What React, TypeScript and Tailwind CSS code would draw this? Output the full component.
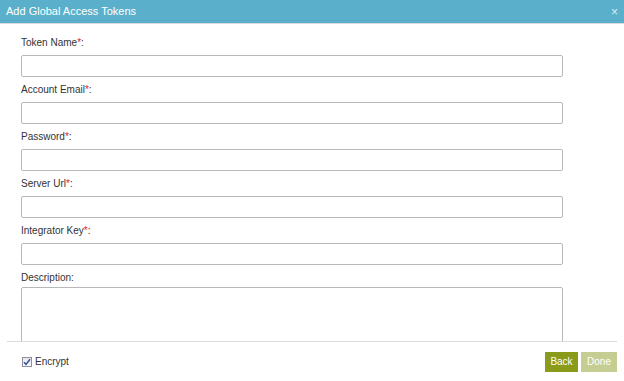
import React from "react";

const Field = ({ label, required = true }: { label: string; required?: boolean }) => (
  <div className="flex flex-col">
    <div className="h-[14px] text-[10px] leading-[14px] text-[#333]">
      {label}
      {required && <span className="text-[#e0202a]">*</span>}:
    </div>
    <div className="mt-[5px] h-[22px] w-[542px] rounded-[2px] border border-[#b8b8b8] bg-white" />
  </div>
);

export default function App() {
  return (
    <div
      className="flex h-[381px] w-[624px] flex-col overflow-hidden bg-white"
      style={{ fontFamily: "Arial, 'Liberation Sans', sans-serif" }}
    >
      <div className="flex h-[24px] shrink-0 items-center justify-between border-b border-[#dcdcdc] bg-[#5aafcb] pl-[6px] pr-[6px]">
        <span className="text-[11px] text-white">Add Global Access Tokens</span>
        <span className="text-[12px] leading-none text-[#d8eef5]">×</span>
      </div>
      <div className="flex-1 overflow-hidden pl-[21px] pt-[12px]">
        <div className="flex flex-col gap-[6px]">
          <Field label="Token Name" />
          <Field label="Account Email" />
          <Field label="Password" />
          <Field label="Server Url" />
          <Field label="Integrator Key" />
          <div className="flex flex-col">
            <div className="h-[14px] text-[10px] leading-[14px] text-[#333]">Description:</div>
            <div className="mt-[2px] h-[80px] w-[542px] rounded-[2px] border border-[#b8b8b8] bg-white" />
          </div>
        </div>
      </div>
      <div className="mx-[7px] flex h-[40px] shrink-0 items-center justify-between border-t border-[#dcdcdc] pl-[15px]">
        <div className="flex items-center gap-[3px] text-[10px] text-[#333]">
          <span className="flex h-[10px] w-[10px] items-center justify-center border border-[#8f8f9d] bg-gradient-to-b from-[#e8e8ec] to-[#f8f8fa]">
            <svg width="8" height="8" viewBox="0 0 8 8">
              <path d="M1 4.2 L3 6.4 L7 1.2" fill="none" stroke="#2e4b9a" strokeWidth="1.4" />
            </svg>
          </span>
          <span>Encrypt</span>
        </div>
        <div className="flex gap-[3px]">
          <button className="h-[20px] w-[33px] bg-[#8a9a1b] text-[10px] text-white">Back</button>
          <button className="h-[20px] w-[36px] bg-[#c6cd92] text-[10px] text-white">Done</button>
        </div>
      </div>
    </div>
  );
}
